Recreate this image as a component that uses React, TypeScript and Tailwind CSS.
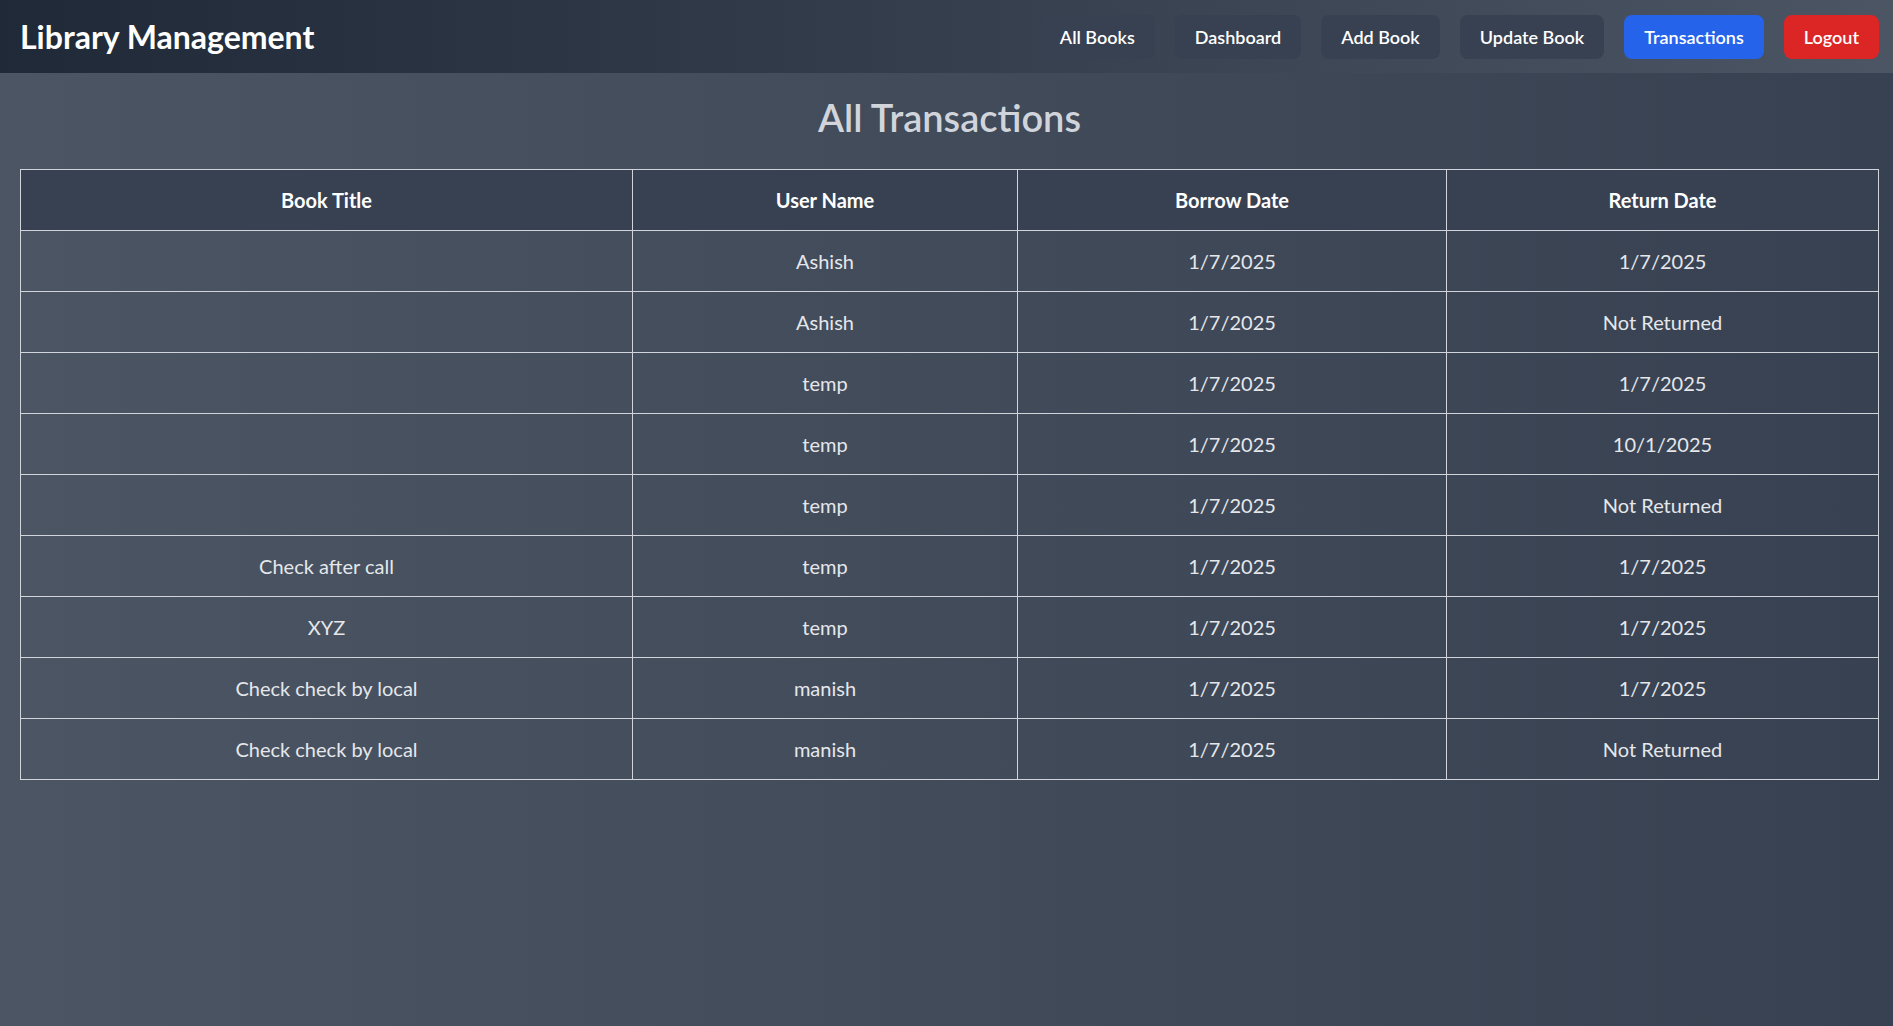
import React from "react";

const rows: [string, string, string, string][] = [
  ["", "Ashish", "1/7/2025", "1/7/2025"],
  ["", "Ashish", "1/7/2025", "Not Returned"],
  ["", "temp", "1/7/2025", "1/7/2025"],
  ["", "temp", "1/7/2025", "10/1/2025"],
  ["", "temp", "1/7/2025", "Not Returned"],
  ["Check after call", "temp", "1/7/2025", "1/7/2025"],
  ["XYZ", "temp", "1/7/2025", "1/7/2025"],
  ["Check check by local", "manish", "1/7/2025", "1/7/2025"],
  ["Check check by local", "manish", "1/7/2025", "Not Returned"],
];

export default function App() {
  const font = { fontFamily: "Lato, 'Noto Sans', 'Liberation Sans', sans-serif" };
  return (
    <div className="min-h-screen bg-gradient-to-r from-[#4b5563] to-[#374151]" style={font}>
      <nav className="h-[73px] flex items-center justify-between pl-5 pr-[14px] bg-gradient-to-r from-[#1f2937] to-[#4b5563]">
        <h1 className="text-[32px] font-bold text-white leading-9">Library Management</h1>
        <div className="flex items-center gap-5">
          <button className="px-5 py-2 rounded-lg bg-[#374151] text-white text-lg font-semibold leading-7">All Books</button>
          <button className="px-5 py-2 rounded-lg bg-[#374151] text-white text-lg font-semibold leading-7">Dashboard</button>
          <button className="px-5 py-2 rounded-lg bg-[#374151] text-white text-lg font-semibold leading-7">Add Book</button>
          <button className="px-5 py-2 rounded-lg bg-[#374151] text-white text-lg font-semibold leading-7">Update Book</button>
          <button className="px-5 py-2 rounded-lg bg-[#2563eb] text-white text-lg font-semibold leading-7">Transactions</button>
          <button className="px-5 py-2 rounded-lg bg-[#dc2626] text-white text-lg font-semibold leading-7">Logout</button>
        </div>
      </nav>
      <main className="pl-5 pr-[14px] pt-6 pb-6">
        <h2 className="text-center text-[38px] leading-10 font-semibold text-[#d1d5db] mb-8">All Transactions</h2>
        <table className="w-full table-fixed border-collapse border border-[#d1d5db] text-xl leading-7">
          <colgroup>
            <col className="w-[612px]" />
            <col className="w-[385px]" />
            <col className="w-[429px]" />
            <col />
          </colgroup>
          <thead className="bg-[#374151]">
            <tr>
              <th className="border border-[#d1d5db] p-4 text-white font-bold">Book Title</th>
              <th className="border border-[#d1d5db] p-4 text-white font-bold">User Name</th>
              <th className="border border-[#d1d5db] p-4 text-white font-bold">Borrow Date</th>
              <th className="border border-[#d1d5db] p-4 text-white font-bold">Return Date</th>
            </tr>
          </thead>
          <tbody>
            {rows.map((r, i) => (
              <tr key={i}>
                {r.map((c, j) => (
                  <td key={j} className="border border-[#d1d5db] p-4 text-center text-[#e5e7eb] h-[61px]">
                    {c}
                  </td>
                ))}
              </tr>
            ))}
          </tbody>
        </table>
      </main>
    </div>
  );
}
